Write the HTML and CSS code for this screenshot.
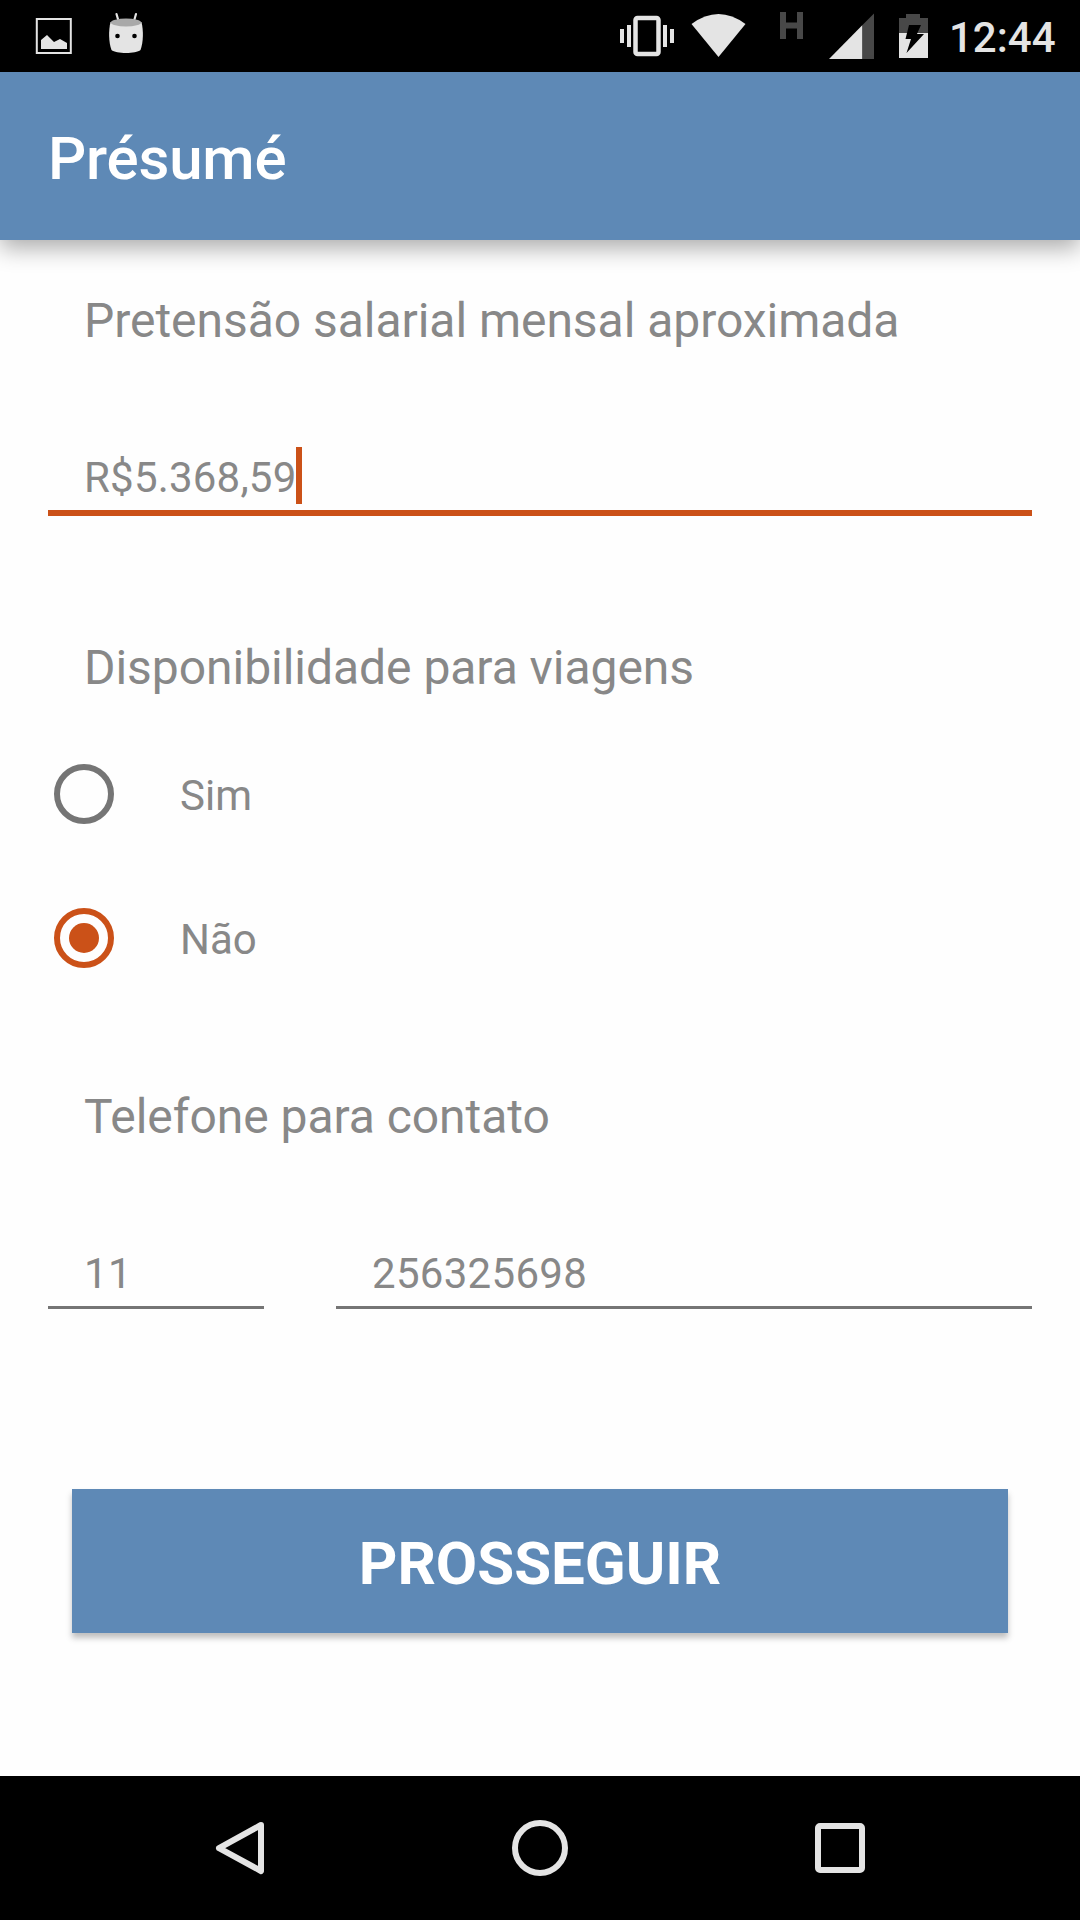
FILE: index.html
```html
<!doctype html>
<html lang="pt-BR">
    <head>
        <meta charset="UTF-8" />
        <meta name="viewport" content="width=device-width, initial-scale=1.0" />
        <title>Présumé</title>
        <link rel="stylesheet" href="styles.css">
    </head>
    <body>
        <!-- Status bar -->
        <div class="status-bar">
            <svg width="320" height="72" viewBox="0 0 320 72">
                <rect x="36.800" y="19" width="34" height="34" fill="none" stroke="#e4e4e4" stroke-width="2" />
                <path d="M41 49V40L47 35L54 42L60 39L67 43V49Z" fill="#e4e4e4" />
                <path d="M116.500 14L118.500 21M136 14L134 21" stroke="#e4e4e4" stroke-width="2.200" stroke-linecap="round" />
                <path d="M110.500 22C108.500 30 108.500 42 111.500 50C116 54 136 54 140.500 50C143.500 42 143.500 30 141.500 22Z" fill="#e4e4e4" />
                <ellipse cx="126" cy="22.500" rx="15.200" ry="4" fill="#a9a9a9" />
                <circle cx="117.500" cy="36" r="2.300" />
                <circle cx="134.500" cy="36" r="2.300" />
            </svg>
            <div class="status-right">
                <svg width="330" height="72" viewBox="610 0 330 72">
                    <g fill="#e4e4e4">
                        <rect x="620" y="29" width="4" height="14" />
                        <rect x="627" y="25" width="4" height="22" />
                        <rect x="663" y="25" width="4" height="22" />
                        <rect x="670" y="29" width="4" height="14" />
                        <path d="M691.500 24Q718.500 4 745.500 24L718.500 57Z" />
                        <path d="M829 59L862.500 25V59Z" />
                        <path d="M899 33H928V58H899Z" />
                    </g>
                    <rect x="635.500" y="18" width="23" height="36" rx="2" fill="none" stroke="#e4e4e4" stroke-width="4.500" />
                    <g fill="#484848">
                        <path d="M780 12H786V22.500H797V12H803V39H797V28.500H786V39H780Z" />
                        <path d="M862.500 25L874 13.500V59H862.500Z" />
                        <path d="M899 18H906V14H920V18H928V33H899Z" />
                    </g>
                    <path d="M909 25H921L917 34H924L906.500 53L911 39H905.500Z" fill="#000" />
                </svg>
                <span class="clock">12:44</span>
            </div>
        </div>

        <!-- App bar -->
        <header class="app-bar">
            <h1>Présumé</h1>
        </header>

        <main class="content">
            <h2>Pretensão salarial mensal aproximada</h2>
            <div class="field focused">R$5.368,59<span class="cursor"></span></div>

            <h2 class="travel">Disponibilidade para viagens</h2>
            <div class="options">
                <div class="option"><span class="radio"></span><span>Sim</span></div>
                <div class="option"><span class="radio checked"></span><span>Não</span></div>
            </div>

            <h2 class="phone">Telefone para contato</h2>
            <div class="phone-row">
                <div class="field">11</div>
                <div class="field">256325698</div>
            </div>

            <button class="submit">PROSSEGUIR</button>
        </main>

        <!-- Navigation bar -->
        <nav class="nav-bar">
            <svg width="60" height="60" viewBox="0 0 60 60">
                <path d="M51 7L9 30.200L51 53Z" />
            </svg>
            <svg width="60" height="60" viewBox="0 0 60 60">
                <circle cx="30" cy="30" r="25" />
            </svg>
            <svg width="60" height="60" viewBox="0 0 60 60">
                <rect x="8" y="8" width="44" height="44" rx="2" />
            </svg>
        </nav>
    </body>
</html>
```
FILE: styles.css
```css
* {
    box-sizing: border-box;
}
body {
    font-family: Roboto, sans-serif;
    margin: 0;
    height: 1920px;
    display: flex;
    flex-direction: column;
    background: #fefefe;
    color: #888;
    overflow: hidden;
}
svg {
    display: block;
}
.status-bar {
    height: 72px;
    flex: none;
    display: flex;
    justify-content: space-between;
    background: #000;
}
.status-right {
    display: flex;
    width: 470px;
}
.clock {
    padding-left: 9px;
    font-size: 42px;
    font-weight: 500;
    line-height: 75px;
    color: #e4e4e4;
}
.app-bar {
    height: 168px;
    flex: none;
    padding: 5px 48px 0;
    background: #5e89b6;
    box-shadow: 0 8px 22px rgba(0, 0, 0, 0.33);
}
h1 {
    margin: 0;
    font-size: 60px;
    font-weight: 500;
    line-height: 163px;
    letter-spacing: -0.2px;
    color: #fff;
}
.content {
    flex: 1;
    padding: 51px 48px 0;
}
h2 {
    margin: 0;
    padding-left: 36px;
    font-size: 48px;
    font-weight: 400;
    line-height: 60px;
    letter-spacing: -0.04px;
}
.travel {
    margin-top: 122px;
}
.phone {
    margin-top: 119px;
}
.field {
    display: flex;
    height: 66px;
    margin-top: 96px;
    padding-left: 36px;
    font-size: 42px;
    line-height: 62px;
    letter-spacing: 0.3px;
    border-bottom: 3px solid #757575;
}
.field.focused {
    height: 69px;
    letter-spacing: 0.2px;
    border-bottom: 6px solid #cb5118;
}
.cursor {
    width: 6px;
    height: 57px;
    background: #cb5118;
}
.options {
    display: grid;
    gap: 84px;
    margin-top: 66px;
    padding-left: 6px;
}
.option {
    display: flex;
    gap: 66px;
    height: 60px;
    font-size: 42px;
    line-height: 63px;
}
.radio {
    display: grid;
    place-items: center;
    width: 60px;
    height: 60px;
    border: 6px solid #757575;
    border-radius: 50%;
}
.radio.checked {
    border-color: #cb5118;
}
.radio.checked::before {
    content: "";
    width: 30px;
    height: 30px;
    border-radius: 50%;
    background: #cb5118;
}
.phone-row {
    display: grid;
    grid-template-columns: 216px 1fr;
    gap: 72px;
}
.submit {
    display: block;
    width: 936px;
    height: 144px;
    margin: 180px auto 0;
    padding: 4px 0 0;
    font-family: inherit;
    font-size: 60px;
    font-weight: 700;
    color: #fff;
    background: #5e89b6;
    border: none;
    box-shadow: 0 5px 6px rgba(0, 0, 0, 0.25);
}
.nav-bar {
    display: flex;
    justify-content: center;
    align-items: center;
    gap: 240px;
    height: 144px;
    flex: none;
    background: #000;
}
.nav-bar svg {
    fill: none;
    stroke: #e4e4e4;
    stroke-width: 6;
    stroke-linejoin: round;
}
```
